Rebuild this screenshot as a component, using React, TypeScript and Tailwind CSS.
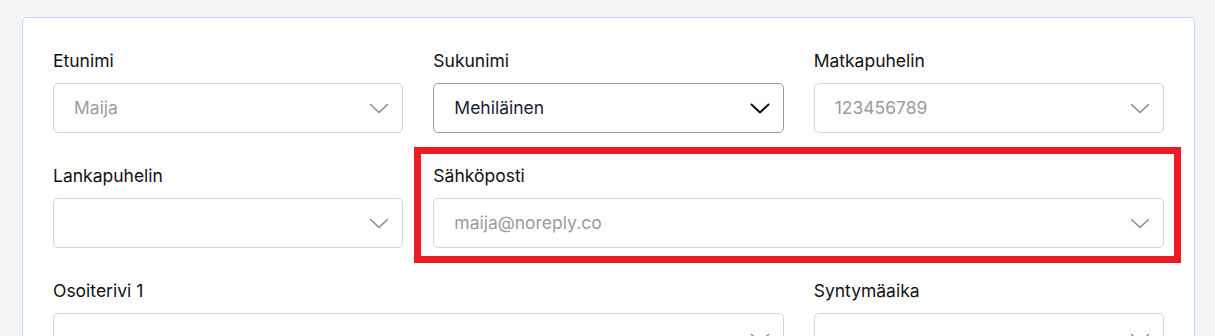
type FieldProps = {
  label: string;
  value?: string;
  active?: boolean;
  span?: string;
  highlight?: boolean;
};

function Field({ label, value = "", active = false, span = "", highlight = false }: FieldProps) {
  return (
    <div className={`relative ${span}`}>
      <div className="pt-[1px] text-[17.5px] leading-[24px] text-[#111111]">{label}</div>
      <div
        className={`mt-[10px] flex h-[50px] items-center justify-between rounded-[5px] border bg-white pl-[20px] pr-[13px] ${
          active ? "border-[#9a9ca8]" : "border-[#d3d5dc]"
        }`}
      >
        <span className={`text-[17.5px] ${active ? "text-[#1c1c3a]" : "text-[#9c9c9c]"}`}>{value}</span>
        <svg
          width="20"
          height="11"
          viewBox="0 0 20 11"
          fill="none"
          stroke={active ? "#111111" : "#8a8a8a"}
          strokeWidth={active ? 2 : 1.5}
          strokeLinecap="round"
          strokeLinejoin="round"
        >
          <path d="M1.5 1.5 L10 9.5 L18.5 1.5" />
        </svg>
      </div>
      {highlight && (
        <div className="pointer-events-none absolute -top-[16px] -bottom-[15px] -left-[19px] -right-[17px] border-[7px] border-[#ed1c24]" />
      )}
    </div>
  );
}

export default function App() {
  return (
    <div
      className="min-h-screen bg-[#f3f4f6] pt-[17px] pl-[22px] pr-[20px]"
      style={{ fontFamily: "Inter, 'Noto Sans', sans-serif" }}
    >
      <div className="rounded-[5px] border border-[#c3dcfb] bg-white px-[30px] pt-[30px] pb-[30px]">
        <div className="grid grid-cols-3 gap-x-[30px] gap-y-[30px]">
          <Field label="Etunimi" value="Maija" />
          <Field label="Sukunimi" value="Mehiläinen" active />
          <Field label="Matkapuhelin" value="123456789" />
          <Field label="Lankapuhelin" />
          <Field label="Sähköposti" value="maija@noreply.co" span="col-span-2" highlight />
          <Field label="Osoiterivi 1" span="col-span-2" />
          <Field label="Syntymäaika" />
        </div>
      </div>
    </div>
  );
}
